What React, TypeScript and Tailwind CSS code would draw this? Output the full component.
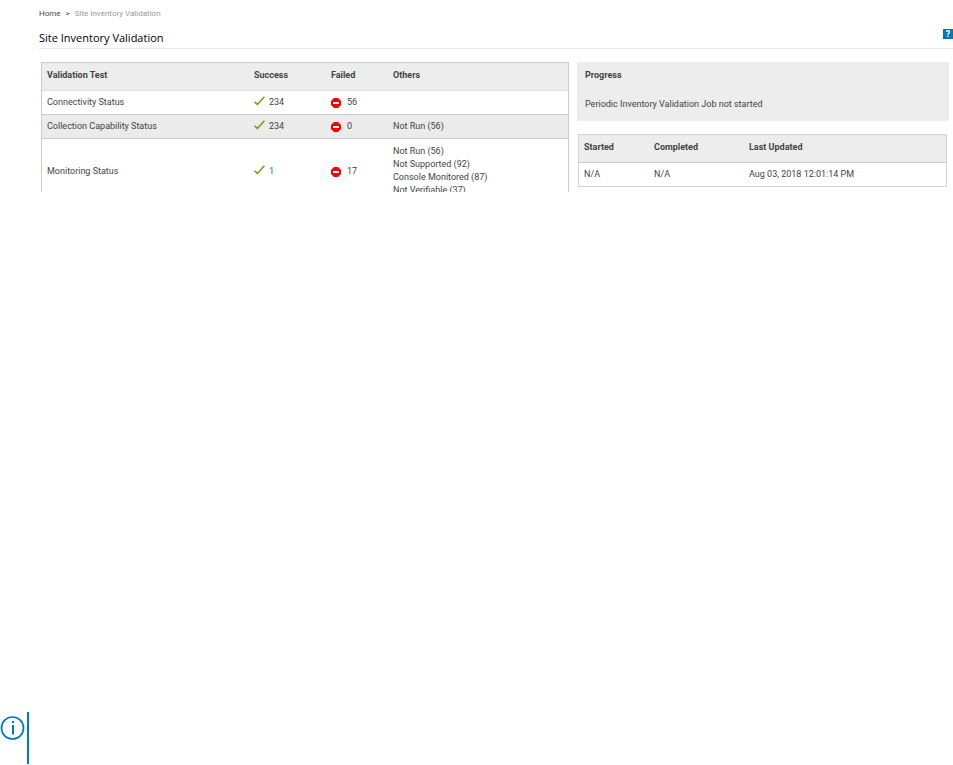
import React from 'react';

function Check() {
  return (
    <svg viewBox="0 0 11 10" className="h-[10px] w-[11px] shrink-0" aria-hidden="true">
      <path d="M0.5 5.8 L3.4 8.4 L10.4 0.8" fill="none" stroke="#6ea204" strokeWidth="1.5" />
    </svg>
  );
}

function Stop() {
  return (
    <svg viewBox="0 0 10 10" className="mt-px h-[10px] w-[10px] shrink-0" aria-hidden="true">
      <path d="M3 0h4l3 3v4l-3 3H3L0 7V3z" fill="#fb0000" />
      <path d="M2 4h6v2H2z" fill="#fff" />
    </svg>
  );
}

const rows = [
  { name: 'Connectivity Status', success: '234', failed: '56', others: [] as string[], look: 'h-[24px]' },
  { name: 'Collection Capability Status', success: '234', failed: '0', others: ['Not Run (56)'], look: 'h-[24px] bg-[#ebebeb]' },
  {
    name: 'Monitoring Status',
    success: '1',
    link: true,
    failed: '17',
    others: ['Not Run (56)', 'Not Supported (92)', 'Console Monitored (87)', 'Not Verifiable (37)'],
    look: 'h-[66px]',
  },
];

export default function App() {
  return (
    <div className="flex min-h-screen flex-col bg-white font-[Roboto,sans-serif] text-[9px] leading-[13px] text-[#444]">
      <header className="pl-[39px]">
        <nav aria-label="Breadcrumb" className="flex gap-[5px] pt-[7px] text-[8px]">
          <a href="#home" className="text-[#444]">Home</a>
          <span aria-hidden="true">&gt;</span>
          <span className="text-[#999]">Site Inventory Validation</span>
        </nav>
        <div className="mt-[8px] flex items-start justify-between border-b border-[#e6e6e6] pb-[2px]">
          <h1 className="pt-[2px] font-['Open_Sans',sans-serif] text-[11px] leading-[16px] text-black">Site Inventory Validation</h1>
          <button aria-label="Help" className="mt-px flex h-[10px] w-[10px] items-center justify-center bg-[#0076b5] text-[9px] leading-[10px] font-bold text-white">?</button>
        </div>
      </header>

      <main className="mt-[13px] flex items-start gap-[8px] pr-[4px] pl-[41px]">
        <div className="h-[130px] flex-1 overflow-hidden border border-b-0 border-[#ccc]">
          <table className="w-full table-fixed border-collapse text-left">
            <thead>
              <tr className="h-[27px] border-b border-[#ddd] bg-[#ededed]">
                <th className="w-[207px] px-[5px] pb-[2px] font-bold">Validation Test</th>
                <th className="w-[77px] px-[5px] pb-[2px] font-bold">Success</th>
                <th className="w-[62px] px-[5px] pb-[2px] font-bold">Failed</th>
                <th className="px-[5px] pb-[2px] font-bold">Others</th>
              </tr>
            </thead>
            <tbody>
              {rows.map((r) => (
                <tr key={r.name} className={`border-b border-[#ccc] ${r.look}`}>
                  <td className="px-[5px]">{r.name}</td>
                  <td className="px-[5px]">
                    <div className="flex gap-[4px]">
                      <Check />
                      <span className={r.link ? 'text-[#0076ce]' : ''}>{r.success}</span>
                    </div>
                  </td>
                  <td className="px-[5px]">
                    <div className="flex items-center gap-[6px]">
                      <Stop />
                      <span>{r.failed}</span>
                    </div>
                  </td>
                  <td className="px-[5px]">
                    {r.others.map((o) => (
                      <div key={o}>{o}</div>
                    ))}
                  </td>
                </tr>
              ))}
            </tbody>
          </table>
        </div>

        <aside className="w-[372px]">
          <section className="bg-[#ededed] px-[8px] pt-[7px] pb-[10px]">
            <h2 className="font-bold">Progress</h2>
            <p className="mt-[16px]">Periodic Inventory Validation Job not started</p>
          </section>
          <div className="mt-[13px] mr-[2px] ml-px border border-[#d4d4d4]">
            <table className="w-full table-fixed border-collapse text-left">
              <thead>
                <tr className="h-[27px] border-b border-[#ccc] bg-[#ededed]">
                  <th className="w-[70px] px-[5px] pb-[2px] font-bold">Started</th>
                  <th className="w-[95px] px-[5px] pb-[2px] font-bold">Completed</th>
                  <th className="px-[5px] pb-[2px] font-bold">Last Updated</th>
                </tr>
              </thead>
              <tbody>
                <tr className="h-[24px]">
                  <td className="px-[5px]">N/A</td>
                  <td className="px-[5px]">N/A</td>
                  <td className="px-[5px]">Aug 03, 2018 12:01:14 PM</td>
                </tr>
              </tbody>
            </table>
          </div>
        </aside>
      </main>

      <footer className="mt-auto mb-px flex h-[52px] w-[29px] justify-between border-r-2 border-[#0076ce] pt-[4px]">
        <svg viewBox="0 0 24 24" className="h-[24px] w-[25px]" role="img" aria-label="Information">
          <circle cx="12" cy="12" r="11" fill="none" stroke="#0076ce" strokeWidth="1.7" />
          <path d="M11.5 5h2v2h-2zM11.5 9h2v9.5h-2z" fill="#0076ce" />
        </svg>
      </footer>
    </div>
  );
}
